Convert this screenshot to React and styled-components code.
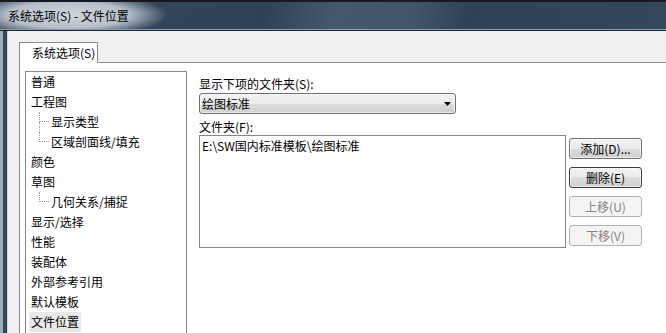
import React from 'react';
import styled, { createGlobalStyle } from 'styled-components';

const GlobalStyle = createGlobalStyle`
  html, body { margin: 0; padding: 0; width: 666px; height: 333px; overflow: hidden; background: #f0f0f0; }
  body { font-family: "Noto Sans CJK SC", "Noto Sans", sans-serif; font-size: 12px; color: #000; }
  #root { width: 666px; height: 333px; }
`;

const Window = styled.div`
  width: 666px;
  height: 333px;
  display: flex;
  flex-direction: column;
  overflow: hidden;
`;

const TitleBar = styled.div`
  flex: none;
  height: 31px;
  box-sizing: border-box;
  border-top: 2px solid #161a20;
  border-bottom: 1px solid #1f2630;
  box-shadow: inset 0 -1px 0 #8c99a9;
  display: flex;
  align-items: center;
  padding: 0 0 1px 8px;
  background:
    radial-gradient(ellipse 100px 22px at 68px 13px, rgba(212,218,224,0.97) 0%, rgba(196,204,213,0.9) 60%, rgba(196,204,213,0) 100%),
    linear-gradient(100deg, #364a60 0%, #2f4258 40%, #44586e 50%, #42566b 62%, #2f4258 70%, #33475d 100%);
`;

const TitleText = styled.span`
  font-size: 12px;
  color: #000;
  letter-spacing: 0;
`;

const Body = styled.div`
  flex: 1;
  display: flex;
  min-height: 0;
`;

const LeftFrame = styled.div`
  flex: none;
  width: 8px;
  background: linear-gradient(90deg, #a3adb9 0 3px, #34485d 3px 7px, #cfd6dd 7px 8px);
`;

const Content = styled.div`
  flex: 1;
  background: #f0f0f0;
  padding: 11px 0 0 11px;
  display: flex;
  flex-direction: column;
  min-width: 0;
`;

const TabStrip = styled.div`
  flex: none;
  display: flex;
  height: 21px;
`;

const Tab = styled.div`
  box-sizing: border-box;
  width: 79px;
  height: 21px;
  border: 1px solid #898c95;
  border-bottom: none;
  background: #fff;
  padding-left: 12px;
  line-height: 19px;
  white-space: nowrap;
`;

const TabFiller = styled.div`
  flex: 1;
  box-sizing: border-box;
  border-bottom: 1px solid #898c95;
`;

const Panel = styled.div`
  flex: 1;
  background: #fff;
  border-left: 1px solid #898c95;
  display: flex;
  align-items: flex-start;
  padding: 8px 0 0 5px;
  min-height: 0;
`;

const ListBox = styled.div`
  flex: none;
  box-sizing: border-box;
  width: 162px;
  height: 300px;
  border: 1px solid #828790;
  display: flex;
  flex-direction: column;
`;

const TreeRow = styled.div`
  height: 20px;
  display: flex;
  align-items: stretch;
  padding-left: ${p => p.$indent}px;
  white-space: nowrap;
`;

const Connector = styled.span`
  flex: none;
  width: 10px;
  display: flex;
  flex-direction: column;
`;

const ConnTop = styled.span`
  box-sizing: border-box;
  height: 10px;
  border-left: 1px dotted #a0a0a0;
  border-bottom: 1px dotted #a0a0a0;
`;

const ConnBottom = styled.span`
  flex: 1;
  border-left: ${p => (p.$last ? 'none' : '1px dotted #a0a0a0')};
`;

const ItemLabel = styled.span`
  padding: 0 2px;
  line-height: 20px;
  background: ${p => (p.$selected ? '#e8e8e8' : 'transparent')};
`;

const RightPane = styled.div`
  margin-left: 12px;
  padding-top: 5px;
  display: flex;
  flex-direction: column;
`;

const FieldLabel = styled.div`
  line-height: 16px;
  height: 16px;
  margin-top: ${p => p.$mt || 0}px;
  white-space: nowrap;
`;

const Combo = styled.div`
  box-sizing: border-box;
  margin-top: 1px;
  width: 257px;
  height: 21px;
  border: 1px solid #707070;
  border-radius: 3px;
  background: linear-gradient(to bottom, #f2f2f2 0%, #ebebeb 50%, #dddddd 50%, #cfcfcf 100%);
  box-shadow: inset 0 0 0 1px rgba(255,255,255,0.55);
  display: flex;
  align-items: center;
  justify-content: space-between;
  padding: 0 4px 0 2px;
  line-height: 19px;
`;

const FolderRow = styled.div`
  display: flex;
  gap: 3px;
`;

const TextBox = styled.div`
  box-sizing: border-box;
  width: 367px;
  height: 113px;
  border: 1px solid #828790;
  padding: 2px 2px;
  line-height: 16px;
  white-space: nowrap;
`;

const ButtonColumn = styled.div`
  padding-top: 3px;
  display: flex;
  flex-direction: column;
  gap: 8px;
`;

const Button = styled.div`
  box-sizing: border-box;
  width: 73px;
  height: 21px;
  border-radius: 3px;
  text-align: center;
  line-height: 19px;
  white-space: nowrap;
  border: 1px solid ${p => (p.$disabled ? '#adb2b5' : p.$default ? '#3c3c3c' : '#707070')};
  color: ${p => (p.$disabled ? '#838383' : '#000')};
  background: ${p => (p.$disabled
    ? '#f4f4f4'
    : 'linear-gradient(to bottom, #f2f2f2 0%, #ebebeb 50%, #dddddd 50%, #cfcfcf 100%)')};
  box-shadow: ${p => (p.$disabled ? 'none' : 'inset 0 0 0 1px rgba(255,255,255,0.6)')};
`;

const items = [
  { t: '普通' },
  { t: '工程图' },
  { t: '显示类型', child: true },
  { t: '区域剖面线/填充', child: true, last: true },
  { t: '颜色' },
  { t: '草图' },
  { t: '几何关系/捕捉', child: true, last: true },
  { t: '显示/选择' },
  { t: '性能' },
  { t: '装配体' },
  { t: '外部参考引用' },
  { t: '默认模板' },
  { t: '文件位置', selected: true },
];

const Arrow = () => (
  <svg width="7" height="4" viewBox="0 0 7 4">
    <path d="M0 0 H7 L3.5 4 Z" fill="#000" />
  </svg>
);

export default function App() {
  return (
    <>
      <GlobalStyle />
      <Window>
        <TitleBar>
          <TitleText>系统选项(S) - 文件位置</TitleText>
        </TitleBar>
        <Body>
          <LeftFrame />
          <Content>
            <TabStrip>
              <Tab>系统选项(S)</Tab>
              <TabFiller />
            </TabStrip>
            <Panel>
              <ListBox>
                {items.map(it => (
                  <TreeRow key={it.t} $indent={it.child ? 13 : 3}>
                    {it.child && (
                      <Connector>
                        <ConnTop />
                        <ConnBottom $last={it.last} />
                      </Connector>
                    )}
                    <ItemLabel $selected={it.selected}>{it.t}</ItemLabel>
                  </TreeRow>
                ))}
              </ListBox>
              <RightPane>
                <FieldLabel>显示下项的文件夹(S):</FieldLabel>
                <Combo>
                  <span>绘图标准</span>
                  <Arrow />
                </Combo>
                <FieldLabel $mt={5}>文件夹(F):</FieldLabel>
                <FolderRow>
                  <TextBox>E:\SW国内标准模板\绘图标准</TextBox>
                  <ButtonColumn>
                    <Button>添加(D)...</Button>
                    <Button $default>删除(E)</Button>
                    <Button $disabled>上移(U)</Button>
                    <Button $disabled>下移(V)</Button>
                  </ButtonColumn>
                </FolderRow>
              </RightPane>
            </Panel>
          </Content>
        </Body>
      </Window>
    </>
  );
}
